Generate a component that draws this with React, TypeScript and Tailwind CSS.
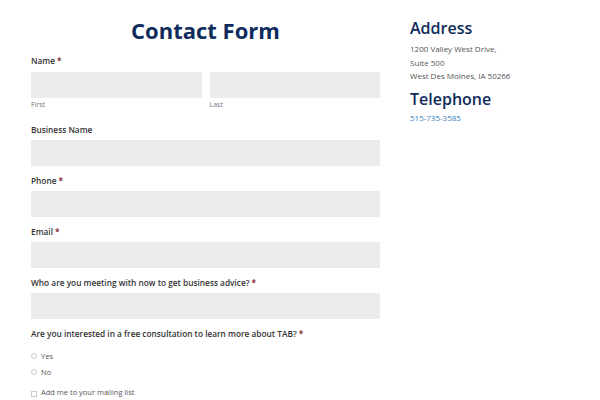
import React from "react";

const Req = () => <span className="text-[#7a0a16] ml-[2px]">*</span>;

function Field({ label, required }: { label: string; required?: boolean }) {
  return (
    <div className="flex flex-col">
      <div className="text-[8.3px] leading-[12px] font-semibold text-[#333]">
        {label}
        {required && <Req />}
      </div>
      <div className="mt-[4px] h-[26px] bg-[#ececec]" />
    </div>
  );
}

export default function App() {
  return (
    <div
      className="w-[600px] h-[400px] bg-white overflow-hidden flex"
      style={{ fontFamily: '"Open Sans", sans-serif' }}
    >
      <div className="ml-[31px] w-[349px] flex flex-col">
        <h1 className="mt-[15px] text-[22px] leading-[30px] font-bold text-[#0f2b5b] text-center">
          Contact Form
        </h1>
        <div className="mt-[10px] flex flex-col">
          <div className="text-[8.3px] leading-[12px] font-semibold text-[#333]">
            Name
            <Req />
          </div>
          <div className="mt-[5px] flex gap-[8px]">
            <div className="flex-1 flex flex-col">
              <div className="h-[26px] bg-[#ececec]" />
              <div className="mt-[2px] text-[7px] leading-[9px] text-[#777]">First</div>
            </div>
            <div className="flex-1 flex flex-col">
              <div className="h-[26px] bg-[#ececec]" />
              <div className="mt-[2px] text-[7px] leading-[9px] text-[#777]">Last</div>
            </div>
          </div>
        </div>
        <div className="mt-[15px] flex flex-col gap-[9px]">
          <Field label="Business Name" />
          <Field label="Phone" required />
          <Field label="Email" required />
          <Field label="Who are you meeting with now to get business advice?" required />
        </div>
        <div className="mt-[9px] text-[8.3px] leading-[12px] font-semibold text-[#333]">
          Are you interested in a free consultation to learn more about TAB?
          <Req />
        </div>
        <div className="mt-[10px] flex flex-col gap-[4px] text-[7.5px] leading-[12px] text-[#555]">
          <div className="flex items-center gap-[4px]">
            <span className="w-[6px] h-[6px] rounded-full border border-[#ccc]" />
            Yes
          </div>
          <div className="flex items-center gap-[4px]">
            <span className="w-[6px] h-[6px] rounded-full border border-[#ccc]" />
            No
          </div>
          <div className="mt-[4px] flex items-center gap-[4px]">
            <span className="mt-[3px] w-[6px] h-[6px] border border-[#ccc]" />
            Add me to your mailing list
          </div>
        </div>
      </div>
      <div className="ml-[30px] flex flex-col">
        <h2 className="mt-[16px] text-[16px] leading-[24px] font-semibold text-[#0f2b5b]">
          Address
        </h2>
        <div className="mt-[2px] text-[8px] leading-[13.5px] text-[#555]">
          <div>1200 Valley West Drive,</div>
          <div>Suite 500</div>
          <div>West Des Moines, IA 50266</div>
        </div>
        <h2 className="mt-[4px] text-[16px] leading-[24px] font-semibold text-[#0f2b5b]">
          Telephone
        </h2>
        <div className="mt-[0px] text-[8px] leading-[13.5px] text-[#3a7fc1]">515-735-3585</div>
      </div>
    </div>
  );
}
